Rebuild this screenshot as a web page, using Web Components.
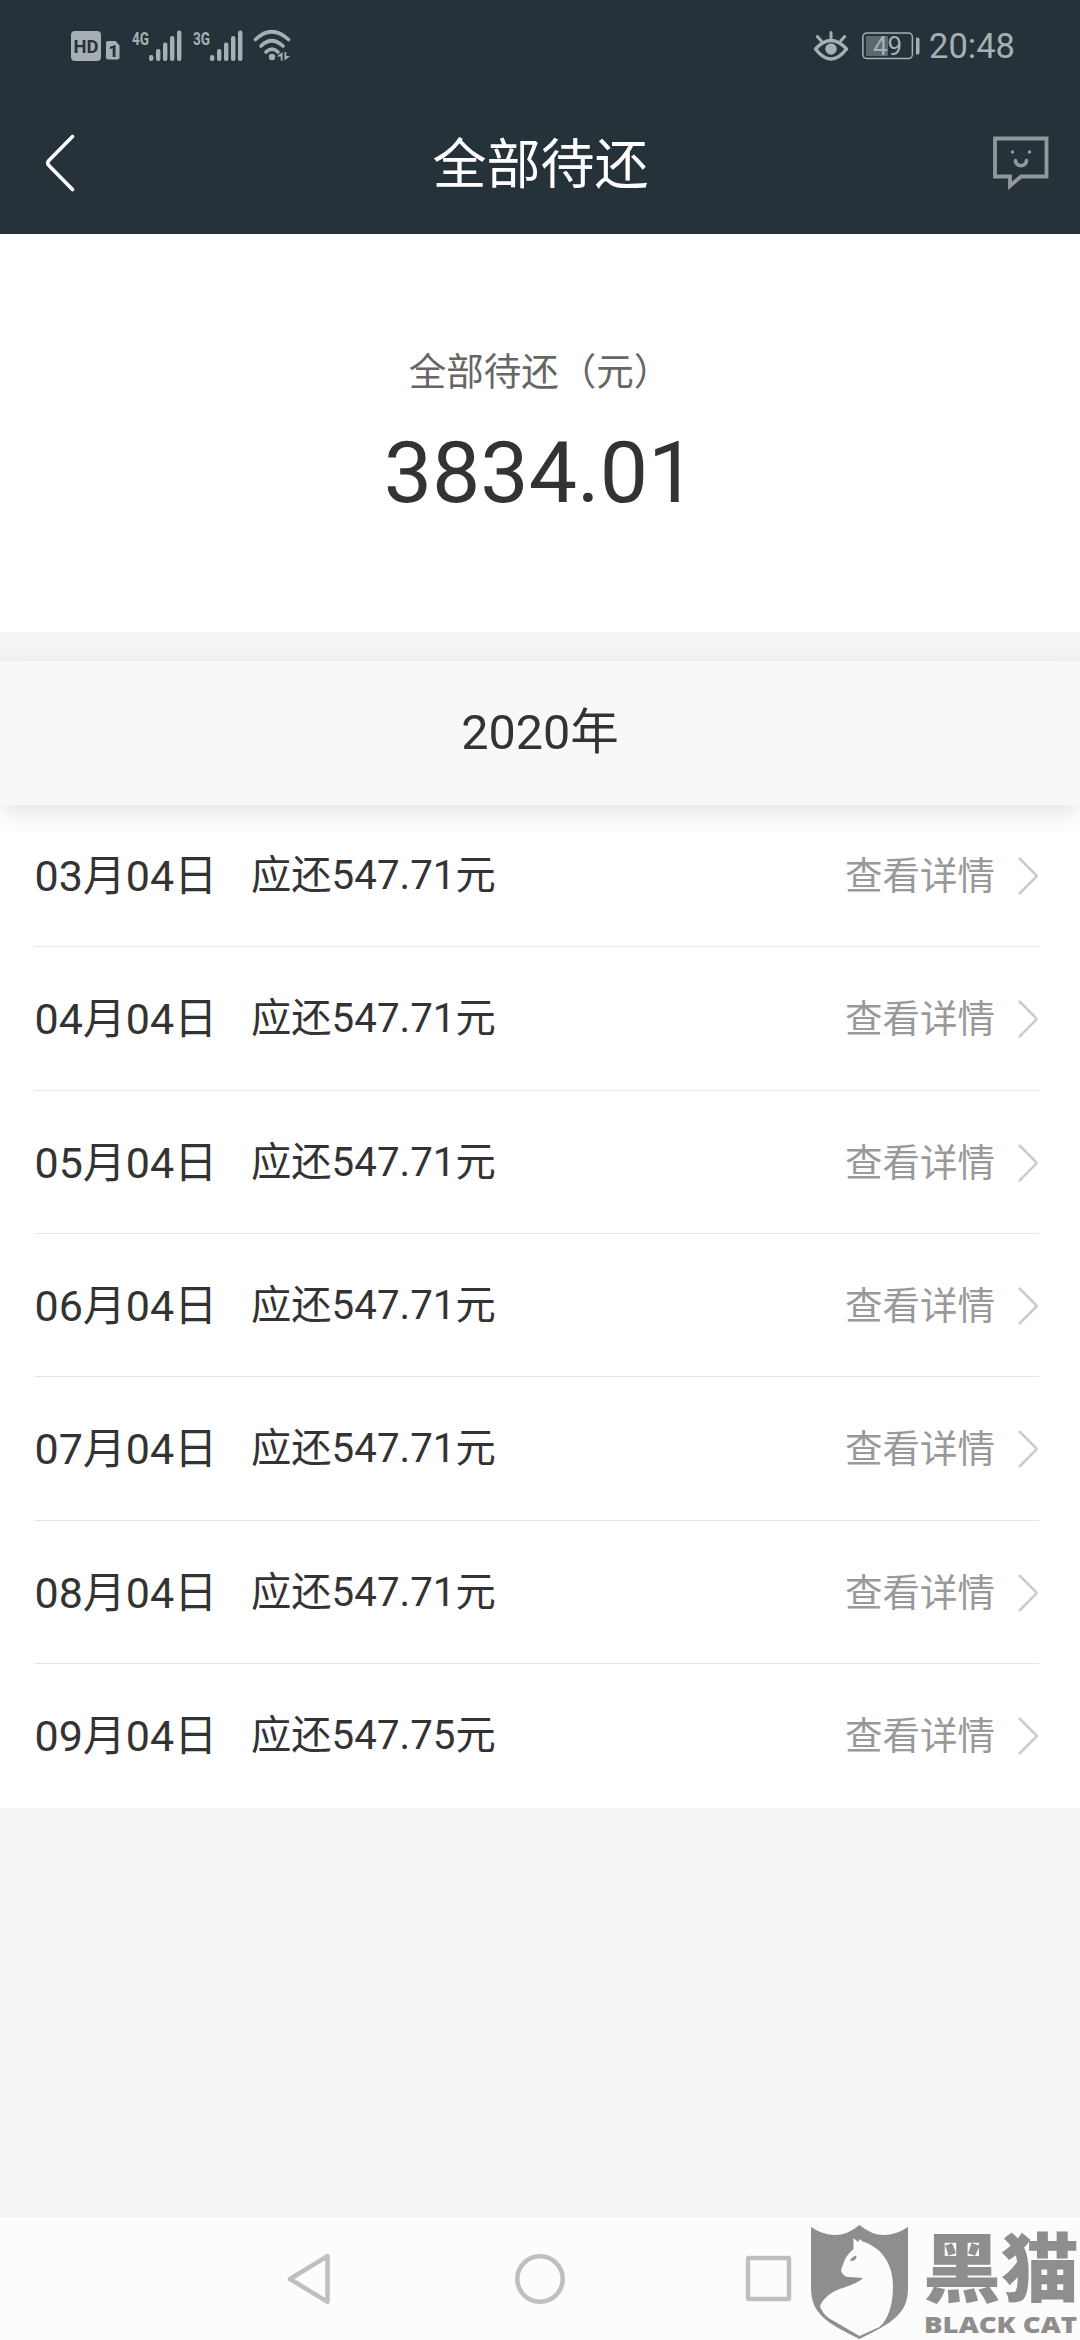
<!DOCTYPE html>
<html lang="zh-CN">
<head>
<meta charset="utf-8">
<meta name="viewport" content="width=device-width">
<title>全部待还</title>
<style>
  body {
    margin: 0;
    font-family: Roboto, "Noto Sans CJK SC", sans-serif;
    color: #333;
    background: #f4f4f4;
  }
</style>
</head>
<body>
<repay-page>
  <status-bar slot="top" time="20:48" battery="49"></status-bar>
  <title-bar slot="top">全部待还</title-bar>
  <total-card label="全部待还（元）">3834.01</total-card>
  <year-header>2020年</year-header>
  <bill-list>
    <bill-row date="03月04日" amount="应还547.71元">查看详情</bill-row>
    <bill-row date="04月04日" amount="应还547.71元">查看详情</bill-row>
    <bill-row date="05月04日" amount="应还547.71元">查看详情</bill-row>
    <bill-row date="06月04日" amount="应还547.71元">查看详情</bill-row>
    <bill-row date="07月04日" amount="应还547.71元">查看详情</bill-row>
    <bill-row date="08月04日" amount="应还547.71元">查看详情</bill-row>
    <bill-row date="09月04日" amount="应还547.75元">查看详情</bill-row>
  </bill-list>
  <nav-bar slot="bottom"><cat-logo></cat-logo></nav-bar>
</repay-page>

<script>
class RepayPage extends HTMLElement {
  constructor() {
    super();
    this.attachShadow({ mode: "open" });
  }

  connectedCallback() {
    this.shadowRoot.innerHTML = `
      <style>
        :host {
          display: flex;
          flex-direction: column;
          width: 1080px;
          height: 2340px;
          overflow: hidden;
        }
        header {
          background: #263239;
        }
        main {
          flex: 1;
        }
      </style>
      <header><slot name="top"></slot></header>
      <main><slot></slot></main>
      <slot name="bottom"></slot>
    `;
  }
}

class StatusBar extends HTMLElement {
  constructor() {
    super();
    this.attachShadow({ mode: "open" });
  }

  signal(label) {
    return `
      <svg width="50" height="32" viewBox="0 0 50 32">
        <text x="0" y="15" font-size="19" font-weight="700" textLength="17" lengthAdjust="spacingAndGlyphs">${label}</text>
        <rect x="17" y="25" width="4.4" height="6" rx="2"/>
        <rect x="24" y="19" width="4.4" height="12" rx="2"/>
        <rect x="31" y="12.5" width="4.4" height="18.5" rx="2"/>
        <rect x="38" y="6" width="4.4" height="25" rx="2"/>
        <rect x="45" y="0.5" width="4.4" height="30.5" rx="2"/>
      </svg>`;
  }

  connectedCallback() {
    const battery = this.getAttribute("battery");
    this.shadowRoot.innerHTML = `
      <style>
        :host {
          display: flex;
          align-items: center;
          justify-content: space-between;
          height: 92px;
          box-sizing: border-box;
          padding: 0 65px 0 70px;
          color: #a5afb4;
          fill: #a5afb4;
        }
        div {
          display: flex;
          align-items: center;
        }
        svg {
          display: block;
          overflow: visible;
        }
        .time {
          font-size: 34.5px;
          line-height: 40px;
          margin-left: 8px;
        }
      </style>
      <div style="gap: 11.5px">
        <svg width="50" height="32" viewBox="0 0 50 32">
          <rect x="1" y="1" width="30" height="30" rx="4"/>
          <text x="3.5" y="22.5" font-size="19" font-weight="700" fill="#263239" textLength="25" lengthAdjust="spacingAndGlyphs">HD</text>
          <path d="M38 11h7.5l4 4.5v12a2 2 0 0 1-2 2h-9.500a2 2 0 0 1-2-2v-14.500a2 2 0 0 1 2-2z"/>
          <text x="38.5" y="26.5" font-size="17" font-weight="900" fill="#263239">1</text>
        </svg>
        ${this.signal("4G")}
        ${this.signal("3G")}
        <svg width="38" height="32" viewBox="0 0 38 32" style="margin-left: -2px">
          <g fill="none" stroke="#a5afb4" stroke-width="3.600" stroke-linecap="round">
            <path d="M2.5 9.5Q18.5 -6 35.5 9.5"/>
            <path d="M8 16Q18.5 5.5 30 16"/>
            <path d="M13 22Q19 16 25 22"/>
          </g>
          <circle cx="19" cy="27" r="3.2"/>
          <path d="M29.5 22v8.500h-1.800v-4h-4zM31.500 22h1.800v4h4l-5.800 4.500z"/>
        </svg>
      </div>
      <div>
        <svg width="36" height="32" viewBox="0 0 36 32">
          <path d="M2.500 19Q18 2 33.500 19Q18 39 2.500 19Z" fill="none" stroke="#a5afb4" stroke-width="3.500" stroke-linejoin="round"/>
          <circle cx="18" cy="19" r="5.800"/>
          <path d="M18 2.500v7M4.300 6.500l4 4.500M31.700 6.500l-4 4.500" fill="none" stroke="#a5afb4" stroke-width="3" stroke-linecap="round"/>
        </svg>
        <svg width="59" height="28" viewBox="0 0 59 28" style="margin-left: 13px">
          <rect x="0.900" y="0.900" width="49.500" height="25.700" rx="4" fill="none" stroke="#a5afb4" stroke-width="1.500"/>
          <rect x="4" y="4" width="22" height="20" rx="1" fill="#5f686e"/>
          <path d="M54 5.500h1.500a2 2 0 0 1 2 2v13a2 2 0 0 1-2 2h-1.500z"/>
          <text x="11" y="22.500" font-size="26">${battery}</text>
        </svg>
        <span class="time">${this.getAttribute("time")}</span>
      </div>
    `;
  }
}

class TitleBar extends HTMLElement {
  constructor() {
    super();
    this.attachShadow({ mode: "open" });
  }

  connectedCallback() {
    this.shadowRoot.innerHTML = `
      <style>
        :host {
          display: grid;
          grid-template-columns: 1fr auto 1fr;
          align-items: center;
          height: 142px;
          box-sizing: border-box;
          padding: 0 31px 0 45px;
          color: #fff;
          font-size: 54px;
          line-height: 60px;
        }
        svg {
          display: block;
        }
        .chat {
          justify-self: end;
        }
        .title {
          margin-left: -13px;
          padding-top: 5px;
        }
      </style>
      <svg width="31" height="58" viewBox="0 0 31 58">
        <path d="M27.500 2.500L3.700 26.800Q1.800 29 3.700 31.200L27.500 55.500" fill="none" stroke="#fff" stroke-width="3.600" stroke-linecap="round"/>
      </svg>
      <span class="title"><slot></slot></span>
      <svg class="chat" width="56" height="54" viewBox="0 0 56 54">
        <path d="M2 2.500H53.500V40.500H28L17 50V40.500H2Z" fill="none" stroke="#92999c" stroke-width="3.800"/>
        <circle cx="19.500" cy="16" r="1.800" fill="#92999c"/>
        <circle cx="36.500" cy="16" r="1.800" fill="#92999c"/>
        <path d="M22.500 24.500C23 31.500 33 31.500 33.500 24.500" fill="none" stroke="#92999c" stroke-width="3.600" stroke-linecap="round"/>
      </svg>
    `;
  }
}

class TotalCard extends HTMLElement {
  constructor() {
    super();
    this.attachShadow({ mode: "open" });
  }

  connectedCallback() {
    this.shadowRoot.innerHTML = `
      <style>
        :host {
          display: flex;
          flex-direction: column;
          align-items: center;
          height: 398px;
          box-sizing: border-box;
          padding-top: 113px;
          background: #fff;
        }
        .label {
          font-size: 37.5px;
          line-height: 50px;
          color: #666;
        }
        .amount {
          font-size: 86px;
          line-height: 100px;
          margin-top: 26px;
        }
      </style>
      <div class="label">${this.getAttribute("label")}</div>
      <div class="amount"><slot></slot></div>
    `;
  }
}

class YearHeader extends HTMLElement {
  constructor() {
    super();
    this.attachShadow({ mode: "open" });
  }

  connectedCallback() {
    this.shadowRoot.innerHTML = `
      <style>
        :host {
          display: flex;
          align-items: center;
          justify-content: center;
          position: relative;
          z-index: 1;
          height: 144px;
          margin-top: 29px;
          font-size: 48.5px;
          line-height: 56px;
          background: #f8f8f8;
          box-shadow: 0 8px 26px -2px rgba(0, 0, 0, 0.13);
        }
      </style>
      <span><slot></slot></span>
    `;
  }
}

class BillList extends HTMLElement {
  constructor() {
    super();
    this.attachShadow({ mode: "open" });
  }

  connectedCallback() {
    this.shadowRoot.innerHTML = `
      <style>
        :host {
          display: flex;
          flex-direction: column;
          height: 1004px;
          margin-top: -1px;
          background: #fff;
        }
        ::slotted(bill-row:last-child) {
          border-bottom-color: transparent;
        }
      </style>
      <slot></slot>
    `;
  }
}

class BillRow extends HTMLElement {
  constructor() {
    super();
    this.attachShadow({ mode: "open" });
  }

  connectedCallback() {
    this.shadowRoot.innerHTML = `
      <style>
        :host {
          display: flex;
          align-items: center;
          height: 143.33px;
          box-sizing: border-box;
          margin: 0 41px 0 35px;
          padding-top: 2px;
          border-bottom: 1.5px solid #e5e5e5;
          line-height: 56px;
        }
        .date {
          font-size: 43px;
          width: 216.5px;
          margin-left: -0.5px;
        }
        .amount {
          font-size: 40.3px;
          flex: 1;
        }
        .more {
          font-size: 37.5px;
          color: #999;
          margin-right: 22px;
        }
      </style>
      <span class="date">${this.getAttribute("date")}</span>
      <span class="amount">${this.getAttribute("amount")}</span>
      <span class="more"><slot></slot></span>
      <svg width="22" height="40" viewBox="0 0 22 40">
        <path d="M2 2L19 19Q20 20 19 21L2 38" fill="none" stroke="#ccc" stroke-width="2.500"/>
      </svg>
    `;
  }
}

class NavBar extends HTMLElement {
  constructor() {
    super();
    this.attachShadow({ mode: "open" });
  }

  connectedCallback() {
    this.shadowRoot.innerHTML = `
      <style>
        :host {
          display: flex;
          align-items: center;
          height: 123px;
          background: #fcfcfc;
        }
        svg {
          fill: none;
          stroke: #bfbfbf;
          stroke-width: 4.5px;
          stroke-linejoin: round;
        }
        .back {
          margin-left: 287px;
        }
        .home {
          margin-left: 184px;
        }
        .recent {
          margin-left: 179px;
        }
        slot {
          display: block;
          margin-left: 18px;
        }
      </style>
      <svg class="back" width="44" height="52" viewBox="0 0 44 52">
        <path d="M40.500 3.200V48.800L3 26Z"/>
      </svg>
      <svg class="home" width="50" height="50" viewBox="0 0 50 50">
        <circle cx="25" cy="25" r="22.700"/>
      </svg>
      <svg class="recent" width="48" height="48" viewBox="0 0 48 48">
        <rect x="4" y="3" width="41" height="41" rx="1"/>
      </svg>
      <slot></slot>
    `;
  }
}

class CatLogo extends HTMLElement {
  constructor() {
    super();
    this.attachShadow({ mode: "open" });
  }

  connectedCallback() {
    this.shadowRoot.innerHTML = `
      <style>
        :host {
          display: block;
        }
        svg {
          display: block;
          overflow: visible;
          fill: #8f8d8e;
        }
      </style>
      <svg width="270" height="123" viewBox="0 0 270 123">
        <!-- shield -->
        <path d="M1 10Q27 27 49.500 8Q72 27 98 10V71C98 97 82 106 49.500 122C17 106 1 97 1 71Z"/>
        <!-- cat -->
        <path fill="#fcfcfc" d="M43.500 21L48 25L50 22L52.500 24.500C74 31 83 50 83 69C83 88 78 103 69.500 110L49.500 119L22 103C16 100 12 95 10 89C19 69 42 72 53 61L39 60C34 61 31 54 31 53C34 46 34 40 43.500 32Z"/>
        <path d="M40 43q5 -5 6.500 -4q0 5 -6 5z"/>
        <text x="113" y="79" font-family="Noto Sans CJK SC" font-weight="900" font-size="75" textLength="156" lengthAdjust="spacingAndGlyphs">黑猫</text>
        <text x="114" y="116" font-family="Open Sans, sans-serif" font-weight="800" font-size="23" textLength="153" lengthAdjust="spacingAndGlyphs">BLACK CAT</text>
      </svg>
    `;
  }
}

customElements.define("repay-page", RepayPage);
customElements.define("status-bar", StatusBar);
customElements.define("title-bar", TitleBar);
customElements.define("total-card", TotalCard);
customElements.define("year-header", YearHeader);
customElements.define("bill-list", BillList);
customElements.define("bill-row", BillRow);
customElements.define("nav-bar", NavBar);
customElements.define("cat-logo", CatLogo);
</script>
</body>
</html>
